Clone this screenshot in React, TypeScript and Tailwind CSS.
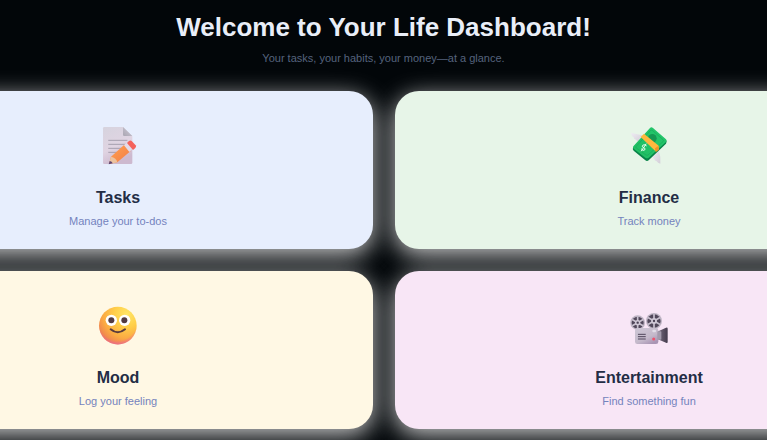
import type { ReactNode } from "react";

function MemoIcon() {
  return (
    <svg viewBox="24 30 120 120" className="size-10" aria-hidden="true">
      <defs>
        <linearGradient id="paper" x1="0" y1="0" x2="0.4" y2="1">
          <stop offset="0" stopColor="#d6d3de" />
          <stop offset="0.6" stopColor="#e0d4e2" />
          <stop offset="1" stopColor="#cdb9cf" />
        </linearGradient>
        <linearGradient id="fold" x1="0" y1="1" x2="1" y2="0">
          <stop offset="0" stopColor="#aaa6b2" />
          <stop offset="1" stopColor="#d0ccd8" />
        </linearGradient>
        <linearGradient id="pencil" x1="0" y1="0" x2="1" y2="1">
          <stop offset="0" stopColor="#ffa452" />
          <stop offset="1" stopColor="#f37a45" />
        </linearGradient>
      </defs>
      <path d="M43 36H99L127 64V143Q127 147 123 147H43Q39 147 39 143V40Q39 36 43 36Z" fill="url(#paper)" />
      <path d="M99 36L127 63H103Q99 63 99 59Z" fill="url(#fold)" />
      <path d="M56 76H111M56 88H111M56 100H104M56 112H90" stroke="#9c98a7" strokeWidth="2.6" strokeLinecap="round" />
      <path d="M103 89L63 125L57 147L82 142L122 108Z" fill="url(#pencil)" />
      <path d="M63 125L57 147L82 142Q79 128 63 125Z" fill="#ecc3a0" />
      <path d="M59 138L56 148L68 145Q66 139 59 138Z" fill="#5c4575" />
      <path d="M102 91L111 82L129 99L118 111Z" fill="#e4dbe8" />
      <path d="M111 84L117 78Q121 75 125 78L137 91Q140 95 136 99L129 105Z" fill="#f4625c" />
    </svg>
  );
}

function MoneyIcon() {
  return (
    <svg viewBox="27 30 120 120" className="size-10" aria-hidden="true">
      <defs>
        <linearGradient id="wing" x1="0" y1="0" x2="1" y2="1">
          <stop offset="0" stopColor="#efedf3" />
          <stop offset="1" stopColor="#d3ced8" />
        </linearGradient>
        <linearGradient id="note" x1="0" y1="1" x2="1" y2="0">
          <stop offset="0" stopColor="#20bd62" />
          <stop offset="1" stopColor="#24c76c" />
        </linearGradient>
      </defs>
      <path d="M33 53Q49 57 67 61L55 79Q49 78 48 74Q41 73 41 67Q34 64 33 53Z" fill="url(#wing)" />
      <path d="M106 101L116 105Q123 125 121 146Q113 144 110 139Q103 138 103 132Q98 129 98 119Z" fill="url(#wing)" />
      <path d="M39 98L90 41Q94 37 98 42L138 76Q142 79 138 86L86 136Q81 140 76 136L41 107Q37 103 39 98Z" fill="#078448" />
      <path d="M40 94L90 39Q94 35 99 39L138 73Q142 77 138 81L86 128Q81 132 76 128L41 101Q37 98 40 94Z" fill="url(#note)" />
      <path d="M48 95L91 47Q94 44 98 47L129 74Q132 77 129 80L84 120Q81 122 78 120L49 99Q47 97 48 95Z" fill="none" stroke="#18a859" strokeWidth="2" />
      <circle cx="97" cy="70" r="13" fill="#159852" />
      <path d="M62 66L72 56L116 92V104L105 107Z" fill="#ffb83e" />
      <path d="M105 100L116 92V105L107 112Z" fill="#ee9429" />
      <path d="M79 92Q72 86 68 91Q64 96 71 98Q78 100 74 105Q69 109 64 102M78 87L64 108" fill="none" stroke="#e9fff0" strokeWidth="3" strokeLinecap="round" />
    </svg>
  );
}

function MoodIcon() {
  return (
    <svg viewBox="24 30 120 120" className="size-10" aria-hidden="true">
      <defs>
        <radialGradient id="face" cx="0.74" cy="0.2" r="0.85">
          <stop offset="0" stopColor="#ffe666" />
          <stop offset="0.4" stopColor="#ffce49" />
          <stop offset="0.75" stopColor="#fbaa43" />
          <stop offset="1" stopColor="#ee8250" />
        </radialGradient>
        <radialGradient id="blush" cx="0.5" cy="0.36" r="0.67">
          <stop offset="0.78" stopColor="#ef5fa0" stopOpacity="0" />
          <stop offset="1" stopColor="#e85fae" stopOpacity="0.8" />
        </radialGradient>
      </defs>
      <circle cx="83.5" cy="92" r="56.5" fill="url(#face)" />
      <circle cx="83.5" cy="92" r="56.5" fill="url(#blush)" />
      <circle cx="64" cy="76" r="17" fill="#fff" />
      <circle cx="104" cy="76" r="17" fill="#fff" />
      <circle cx="64" cy="76" r="9" fill="#513b42" />
      <circle cx="103" cy="76" r="9" fill="#513b42" />
      <path d="M62 103Q83 121 105 103" fill="none" stroke="#5a3b3c" strokeWidth="6" strokeLinecap="round" />
    </svg>
  );
}

function Reel({ x, y, r }: { x: number; y: number; r: number }) {
  return (
    <g transform={`translate(${x} ${y})`}>
      <circle r={r} fill="#beb5c4" />
      <circle r={r - 4} fill="#51475a" />
      {[0, 60, 120, 180, 240, 300].map((angle) => (
        <path key={angle} d={`M0 0V-${r - 3}`} transform={`rotate(${angle})`} stroke="#c9c1cf" strokeWidth="5" />
      ))}
      <circle r={r * 0.36} fill="#d1c9d7" />
      <circle r="3.5" fill="#4a4053" />
    </g>
  );
}

function ProjectorIcon() {
  return (
    <svg viewBox="27 15 120 120" className="size-10" aria-hidden="true">
      <defs>
        <linearGradient id="camera" x1="0" y1="0" x2="0.7" y2="1">
          <stop offset="0" stopColor="#cdc6d5" />
          <stop offset="0.65" stopColor="#c5bacb" />
          <stop offset="1" stopColor="#a995b4" />
        </linearGradient>
        <linearGradient id="lens" x1="0" y1="0" x2="1" y2="0">
          <stop offset="0" stopColor="#7c7184" />
          <stop offset="1" stopColor="#443b4d" />
        </linearGradient>
      </defs>
      <Reel x={53} y={68} r={22} />
      <Reel x={102} y={63} r={24} />
      <path d="M110 96L138 83Q143 81 143 86V125Q143 131 138 128L110 116Z" fill="url(#lens)" />
      <rect x="45" y="84" width="70" height="48" rx="7" fill="url(#camera)" />
      <rect x="112" y="94" width="12" height="25" rx="2" fill="#a39aac" />
      <path d="M55 103H76M55 110H76M55 117H76" stroke="#51475c" strokeWidth="3" strokeLinecap="round" />
      <rect x="97" y="89" width="11" height="8" rx="3" fill="#e2dde8" />
      <circle cx="101" cy="117" r="4.5" fill="#f0526c" />
    </svg>
  );
}

type Card = { title: string; note: string; color: string; icon: ReactNode };

const cards: Card[] = [
  { title: "Tasks", note: "Manage your to-dos", color: "bg-[#e7eefd]", icon: <MemoIcon /> },
  { title: "Finance", note: "Track money", color: "bg-[#e7f5e8]", icon: <MoneyIcon /> },
  { title: "Mood", note: "Log your feeling", color: "bg-[#fff8e4]", icon: <MoodIcon /> },
  { title: "Entertainment", note: "Find something fun", color: "bg-[#f8e6f6]", icon: <ProjectorIcon /> },
];

export default function App() {
  return (
    <div className="flex h-screen flex-col items-center overflow-hidden bg-[#020609] font-['Liberation_Sans',Arial,sans-serif]">
      <header className="shrink-0 pt-2 text-center">
        <h1 className="text-[26px] leading-[38px] font-bold text-[#e9eef8]">Welcome to Your Life Dashboard!</h1>
        <p className="mt-0.5 text-[11px] leading-5 text-[#55637d]">Your tasks, your habits, your money—at a glance.</p>
      </header>
      <main className="mt-[23px] grid w-[1040px] shrink-0 grid-cols-2 gap-[22px]">
        {cards.map((card) => (
          <section
            key={card.title}
            className={`flex flex-col items-center rounded-3xl pt-[34px] pb-5 shadow-[0_6px_24px_rgba(255,255,255,0.8)] ${card.color}`}
          >
            {card.icon}
            <h2 className="mt-5 text-[16px] leading-[26px] font-bold text-[#232d45]">{card.title}</h2>
            <p className="mt-0.5 text-[11px] leading-4 text-[#7483bd]">{card.note}</p>
          </section>
        ))}
      </main>
    </div>
  );
}
